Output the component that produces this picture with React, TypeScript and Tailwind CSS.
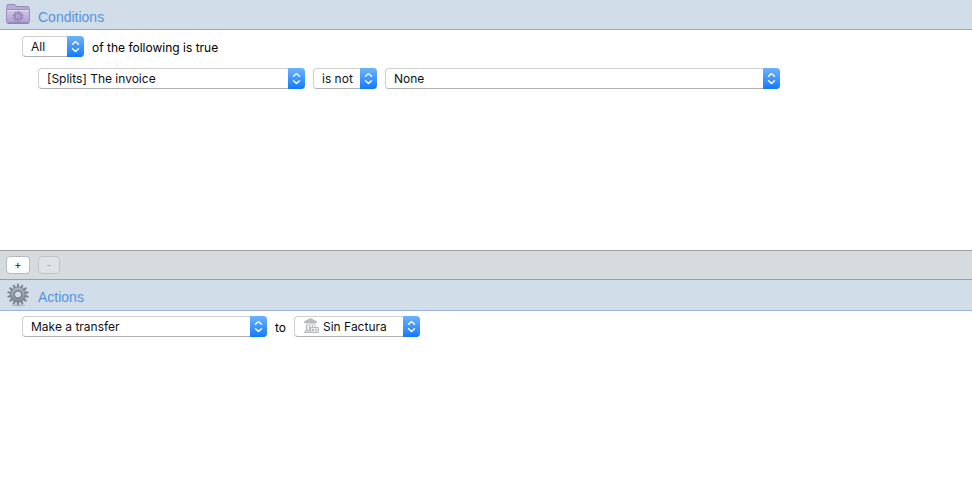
import { useState, type ReactNode } from 'react';
import clsx from 'clsx';

type PopupProps = {
  label: string;
  options: string[];
  className: string;
  icon?: ReactNode;
};

// Native select dressed as a macOS popup button
function Popup({ label, options, className, icon }: PopupProps) {
  return (
    <span className={clsx('relative block h-[21px]', className)}>
      <select
        aria-label={label}
        className={clsx(
          'block h-full w-full appearance-none rounded border border-[#cfcfcf] border-b-[#b0b0b0] bg-white pr-5 text-[#111] outline-none',
          icon ? 'pl-7' : 'pl-2'
        )}
      >
        {options.map((option) => (
          <option key={option}>{option}</option>
        ))}
      </select>
      {icon && <span className="pointer-events-none absolute top-[2px] left-[9px]">{icon}</span>}
      <span className="pointer-events-none absolute top-0 right-0 flex h-full w-[17px] items-center justify-center rounded-r bg-gradient-to-b from-[#6bb3fa] to-[#0d79fd]">
        <svg width="9" height="13" viewBox="0 0 9 13" fill="none" stroke="#fff" strokeWidth="1.4" strokeLinecap="round" strokeLinejoin="round">
          <path d="M1.5 4.3 4.5 1.5l3 2.8M1.5 8.7l3 2.8 3-2.8" />
        </svg>
      </span>
    </span>
  );
}

const FOLDER_TEETH = Array.from({ length: 10 }, (_, i) => i * 36);

function FolderIcon() {
  return (
    <svg width="24" height="22" viewBox="0 0 24 22" aria-hidden="true">
      <defs>
        <linearGradient id="folder" x1="0" y1="0" x2="0" y2="1">
          <stop offset="0" stopColor="#d3c9ec" />
          <stop offset="1" stopColor="#ad9ed3" />
        </linearGradient>
      </defs>
      <path d="M1 17V2Q1 .5 2.5.5h6Q9.500.5 10 2v.5h11.500Q23 2.500 23 4v13z" fill="#b9add6" stroke="#9488b5" />
      <path d="M.5 5.500h23v12q0 1.500-1.500 1.500H2Q.5 19 .5 17.500z" fill="url(#folder)" stroke="#9c8fc0" />
      <path d="M1.500 6.500h21" stroke="#e2dbf3" />
      <path d="M1.500 19.200h21" stroke="#7d7399" />
      <g fill="#8f82b6">
        {FOLDER_TEETH.map((angle) => (
          <path key={angle} d="M11 9.500 11.400 6.800h1.200l.4 2.700z" transform={`rotate(${angle} 12 12.300)`} />
        ))}
      </g>
      <circle cx="12" cy="12.300" r="3" fill="none" stroke="#988bbd" strokeWidth="1.800" />
      <circle cx="12" cy="12.300" r="1" fill="#9d90c2" />
    </svg>
  );
}

const TEETH = Array.from({ length: 14 }, (_, i) => (i * 360) / 14);

function GearIcon() {
  return (
    <svg width="24" height="24" viewBox="0 0 24 24" aria-hidden="true">
      <defs>
        <linearGradient id="gear" x1="0" y1="0" x2="0" y2="24" gradientUnits="userSpaceOnUse">
          <stop offset="0" stopColor="#858b98" />
          <stop offset="1" stopColor="#5d626e" />
        </linearGradient>
        <linearGradient id="rim" x1="0" y1="4" x2="0" y2="19" gradientUnits="userSpaceOnUse">
          <stop offset="0" stopColor="#b0b5c0" />
          <stop offset="1" stopColor="#858b98" />
        </linearGradient>
      </defs>
      <ellipse cx="12" cy="22.200" rx="7" ry="1" fill="#b3bcc8" />
      <g fill="url(#gear)">
        {TEETH.map((angle) => (
          <path key={angle} d="M10.500 5.500 11.100.7h1.800l.6 4.800z" transform={`rotate(${angle} 12 11.500)`} />
        ))}
      </g>
      <circle cx="12" cy="11.500" r="5.600" fill="none" stroke="url(#gear)" strokeWidth="4" />
      <circle cx="12" cy="11.500" r="5.600" fill="none" stroke="url(#rim)" strokeWidth="2.600" />
      <circle cx="12" cy="11.500" r="3.700" fill="#d1dde9" stroke="#646a77" />
    </svg>
  );
}

function BankIcon() {
  return (
    <svg width="16" height="16" viewBox="0 0 16 16" fill="#b5bbc3" aria-hidden="true">
      <path d="M7.500 0 14 3.500V5H1V3.500z" />
      <path d="M2.500 5.500h10v1h-10zM3 7h1.500v5H3zM6 7h1.500v5H6zM9 7h1v2H9zM11.500 7h1v2h-1zM2 12h5v1H2zM1 13.500h6V15H1z" />
      <path d="M7.500 9.500h8v5h-8z" fill="#e5e8ec" stroke="#b5bbc3" />
      <path d="M9 11h2v2H9zM12.500 11H14v2h-1.500z" />
    </svg>
  );
}

function SectionHeader({ icon, title, className }: { icon: ReactNode; title: string; className: string }) {
  return (
    <header className={clsx('flex items-center gap-2 border-b bg-[#d1dde9] px-1.5', className)}>
      {icon}
      <h2 className="pt-1 font-['Liberation_Sans',sans-serif] text-[14px] leading-5 text-[#5494dc]">{title}</h2>
    </header>
  );
}

export default function App() {
  const [conditions, setConditions] = useState([0]);

  return (
    <main className="flex min-h-screen flex-col bg-white font-[Inter,sans-serif] text-[12px] leading-4 text-black">
      <SectionHeader icon={<FolderIcon />} title="Conditions" className="h-[30px] border-[#9fa9b3]" />
      <section className="min-h-55 px-[22px] pt-1.5">
        <div className="flex items-center gap-2">
          <Popup label="Match" options={['All', 'Any']} className="w-[62px]" />
          <span className="pt-0.5">of the following is true</span>
        </div>
        {conditions.map((id) => (
          <div key={id} className="mt-[11px] flex items-center gap-2 pl-4">
            <Popup label="Field" options={['[Splits] The invoice']} className="w-[267px]" />
            <Popup label="Comparison" options={['is not', 'is']} className="w-16" />
            <Popup label="Value" options={['None']} className="w-[395px]" />
          </div>
        ))}
      </section>
      <div className="flex h-[30px] items-center gap-2 border-y border-[#999fa4] bg-[#d6dbdf] px-1.5">
        <button
          type="button"
          aria-label="Add condition"
          onClick={() => setConditions([...conditions, conditions.length])}
          className="flex h-[18px] w-6 items-center justify-center rounded border border-[#b5b9bc] bg-white text-[11px] text-[#222]"
        >
          +
        </button>
        <button
          type="button"
          aria-label="Remove condition"
          disabled={conditions.length === 1}
          onClick={() => setConditions(conditions.slice(0, -1))}
          className="flex h-[18px] w-[22px] items-center justify-center rounded border border-[#b5b9bc] bg-white text-[11px] text-[#222] disabled:border-[#c0c4c7] disabled:bg-[#dfe3e6] disabled:text-[#a5a9ad]"
        >
          -
        </button>
      </div>
      <SectionHeader icon={<GearIcon />} title="Actions" className="h-[31px] border-[#9fb5d8]" />
      <section className="flex-1 px-[22px] pt-[5px]">
        <div className="flex items-center gap-2">
          <Popup label="Action" options={['Make a transfer']} className="w-[245px]" />
          <span className="pt-0.5">to</span>
          <Popup label="Account" options={['Sin Factura']} className="w-[126px]" icon={<BankIcon />} />
        </div>
      </section>
    </main>
  );
}
